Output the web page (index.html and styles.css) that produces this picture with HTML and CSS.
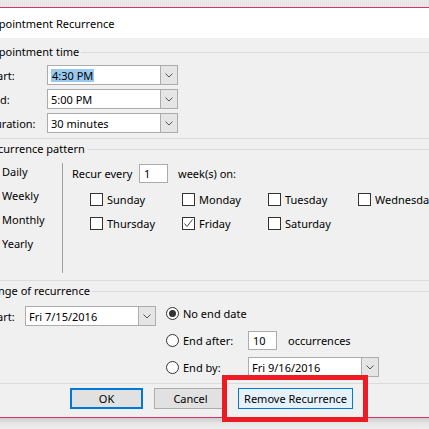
FILE: index.html
```html
<!DOCTYPE html>
<html>
<head>
<meta charset="utf-8">
<link rel="stylesheet" href="styles.css">
</head>
<body>
<div class="screen">
  <div class="topstrip"></div>
  <div class="dialog">
    <div class="titlebar">Appointment Recurrence</div>
    <div class="dbody">
      <fieldset class="group g1">
        <legend>Appointment time</legend>
        <div class="trow">
          <span class="lbl">Start:</span>
          <div class="combo"><div class="field"><span class="sel">4:30 PM</span></div><div class="dd"><svg width="8" height="5" viewBox="0 0 8 5"><polyline points="0.5,0.5 4,4 7.5,0.5" fill="none" stroke="#555" stroke-width="1"/></svg></div></div>
        </div>
        <div class="trow">
          <span class="lbl">End:</span>
          <div class="combo"><div class="field">5:00 PM</div><div class="dd"><svg width="8" height="5" viewBox="0 0 8 5"><polyline points="0.5,0.5 4,4 7.5,0.5" fill="none" stroke="#555" stroke-width="1"/></svg></div></div>
        </div>
        <div class="trow">
          <span class="lbl">Duration:</span>
          <div class="combo"><div class="field">30 minutes</div><div class="dd"><svg width="8" height="5" viewBox="0 0 8 5"><polyline points="0.5,0.5 4,4 7.5,0.5" fill="none" stroke="#555" stroke-width="1"/></svg></div></div>
        </div>
      </fieldset>

      <fieldset class="group g2">
        <legend>Recurrence pattern</legend>
        <div class="pattern">
          <div class="freq">
            <div class="opt"><span class="radio"></span><span>Daily</span></div>
            <div class="opt"><span class="radio"></span><span>Weekly</span></div>
            <div class="opt"><span class="radio"></span><span>Monthly</span></div>
            <div class="opt"><span class="radio"></span><span>Yearly</span></div>
          </div>
          <div class="weekly">
            <div class="every">
              <span class="every-lbl">Recur every</span>
              <div class="tbox">1</div>
              <span class="weeks">week(s) on:</span>
            </div>
            <div class="days">
              <div class="day"><span class="cb"></span><span>Sunday</span></div>
              <div class="day"><span class="cb"></span><span>Monday</span></div>
              <div class="day"><span class="cb"></span><span>Tuesday</span></div>
              <div class="day"><span class="cb"></span><span>Wednesday</span></div>
              <div class="day"><span class="cb"></span><span>Thursday</span></div>
              <div class="day"><span class="cb checked"><svg width="11" height="11" viewBox="0 0 11 11"><polyline points="1.5,5.5 4,8.5 9.5,1.5" fill="none" stroke="#444" stroke-width="1"/></svg></span><span>Friday</span></div>
              <div class="day"><span class="cb"></span><span>Saturday</span></div>
            </div>
          </div>
        </div>
      </fieldset>

      <fieldset class="group g3">
        <legend>Range of recurrence</legend>
        <div class="range">
          <div class="rstart">
            <span class="lbl2">Start:</span>
            <div class="combo"><div class="field">Fri 7/15/2016</div><div class="dd"><svg width="8" height="5" viewBox="0 0 8 5"><polyline points="0.5,0.5 4,4 7.5,0.5" fill="none" stroke="#555" stroke-width="1"/></svg></div></div>
          </div>
          <div class="rend">
            <div class="rrow"><span class="radio on"><span class="dot"></span></span><span>No end date</span></div>
            <div class="rrow"><span class="radio"></span><span class="rl">End after:</span><div class="tbox">10</div><span class="occ">occurrences</span></div>
            <div class="rrow"><span class="radio"></span><span class="rl">End by:</span><div class="combo"><div class="field">Fri 9/16/2016</div><div class="dd"><svg width="8" height="5" viewBox="0 0 8 5"><polyline points="0.5,0.5 4,4 7.5,0.5" fill="none" stroke="#555" stroke-width="1"/></svg></div></div></div>
          </div>
        </div>
      </fieldset>

      <div class="buttons">
        <div class="btn ok">OK</div>
        <div class="btn">Cancel</div>
        <div class="btn remove">Remove Recurrence</div>
      </div>
    </div>
  </div>
  <div class="bottomstrip"></div>
  <div class="redbox"></div>
</div>
</body>
</html>
```

FILE: styles.css
```css
html, body {
  margin: 0;
  padding: 0;
}
body {
  width: 429px;
  height: 429px;
  overflow: hidden;
  background: #f0f0f0;
  font-family: "Noto Sans", "Open Sans", sans-serif;
  font-size: 11px;
  color: #000;
}
.screen {
  position: relative;
  width: 429px;
  height: 429px;
  overflow: hidden;
}
.topstrip {
  height: 7px;
  background: repeating-linear-gradient(90deg, #e4e4e4 0 1px, #ececec 1px 2px);
}
.dialog {
  margin-left: -20px;
  width: 520px;
  border-top: 1px solid #d6336c;
  border-bottom: 1px solid #d6336c;
  background: #f0f0f0;
}
.titlebar {
  height: 30px;
  background: #fff;
  display: flex;
  align-items: center;
  padding-left: 5px;
  font-size: 11px;
}
.dbody {
  height: 379px;
  box-sizing: border-box;
  padding-top: 6px;
}
.group {
  margin: 0;
  min-width: 0;
  border: none;
  border-top: 1px solid #dcdcdc;
  border-bottom: 1px solid #dcdcdc;
  padding: 0;
}
.group legend {
  margin-left: 5px;
  padding: 0 2px 0 0;
  line-height: 16px;
  height: 16px;
}
.g1 {
  padding: 5px 0 5px 0;
  display: flex;
  flex-direction: column;
  gap: 4px;
}
.g2 {
  margin-top: 2px;
  padding: 6px 0 7px 0;
}
.g3 {
  margin-top: 2px;
  padding: 4px 0 6px 0;
}
.trow {
  display: flex;
  align-items: center;
  height: 20px;
}
.lbl {
  width: 60px;
  margin-left: 7px;
}
.combo {
  display: flex;
  width: 131px;
  height: 20px;
}
.combo .field {
  flex: 1;
  background: #fff;
  border: 1px solid #acacac;
  display: flex;
  align-items: center;
  padding-left: 3px;
  white-space: nowrap;
}
.combo .dd {
  width: 16px;
  border: 1px solid #acacac;
  border-left: none;
  background: #e5e5e5;
  display: flex;
  align-items: center;
  justify-content: center;
}
.sel {
  background: #99c9ef;
  padding: 0 1px;
  line-height: 13px;
}
.pattern {
  display: flex;
  height: 110px;
}
.freq {
  width: 78px;
  padding-left: 4px;
  border-right: 1px solid #a0a0a0;
  display: flex;
  flex-direction: column;
  gap: 7px;
}
.opt {
  display: flex;
  align-items: center;
  height: 17px;
  gap: 5px;
}
.radio {
  width: 13px;
  height: 13px;
  box-sizing: border-box;
  border: 1px solid #333;
  border-radius: 50%;
  background: #fff;
  flex: none;
  display: flex;
  align-items: center;
  justify-content: center;
}
.radio .dot {
  width: 7px;
  height: 7px;
  border-radius: 50%;
  background: #333;
}
.weekly {
  margin-left: 9px;
}
.every {
  display: flex;
  align-items: center;
  height: 20px;
}
.every-lbl {
  width: 67px;
}
.tbox {
  width: 29px;
  height: 19px;
  box-sizing: border-box;
  background: #fff;
  border: 1px solid #acacac;
  padding-left: 4px;
  display: flex;
  align-items: center;
}
.weeks {
  margin-left: 10px;
}
.days {
  margin-top: 8px;
  margin-left: 18px;
  display: grid;
  grid-template-columns: 92px 86px 90px auto;
  row-gap: 7px;
}
.day {
  display: flex;
  align-items: center;
  height: 17px;
  gap: 4px;
  white-space: nowrap;
}
.cb {
  width: 13px;
  height: 13px;
  box-sizing: border-box;
  border: 1px solid #333;
  background: #fff;
  flex: none;
  display: flex;
  align-items: center;
  justify-content: center;
}
.range {
  display: flex;
}
.rstart {
  display: flex;
  align-items: center;
  height: 20px;
  margin-top: 3px;
}
.lbl2 {
  width: 38px;
  margin-left: 7px;
}
.rend {
  margin-left: 10px;
  display: flex;
  flex-direction: column;
  gap: 7px;
}
.rrow {
  display: flex;
  align-items: center;
  height: 20px;
}
.rrow .radio {
  margin-right: 4px;
}
.rl {
  width: 65px;
}
.occ {
  margin-left: 11px;
}
.buttons {
  margin-top: 4px;
  margin-left: 90px;
  display: flex;
  gap: 11px;
}
.btn {
  width: 73px;
  height: 21px;
  box-sizing: border-box;
  background: #e1e1e1;
  border: 1px solid #adadad;
  display: flex;
  align-items: center;
  justify-content: center;
}
.btn.ok {
  border: 2px solid #0078d7;
}
.btn.remove {
  width: 115px;
  background: #e5f1fb;
  border: 1px solid #0078d7;
}
.bottomstrip {
  height: 11px;
  background: linear-gradient(#cdcdcd, #e6e6e6 50%, #eeeeee);
}
.redbox {
  position: absolute;
  left: 222px;
  top: 375px;
  width: 146px;
  height: 47px;
  box-sizing: border-box;
  border: 5px solid #ed1c24;
}
```
